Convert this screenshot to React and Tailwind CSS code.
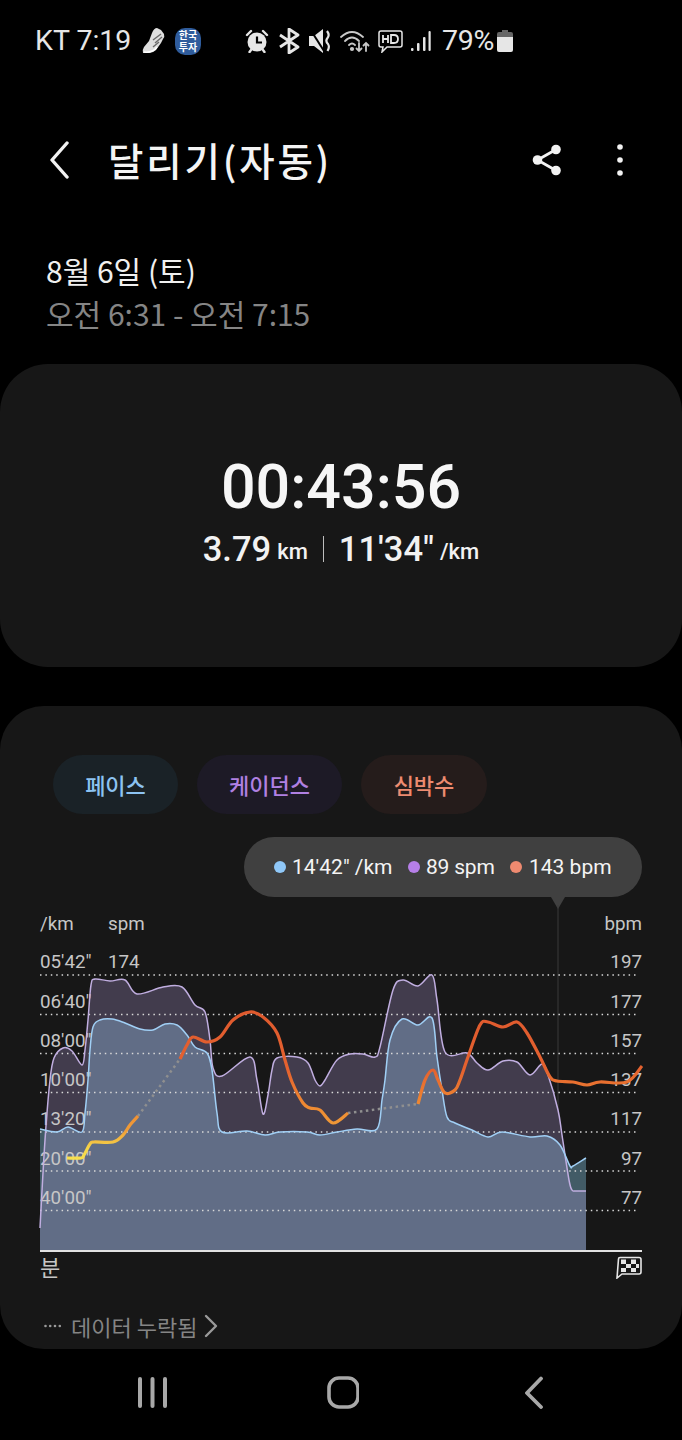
import React from "react";

const SANS = "font-['Roboto','Noto_Sans_CJK_KR',sans-serif]";

function smooth(pts) {
  let d = `M${pts[0][0]} ${pts[0][1]}`;
  for (let i = 0; i < pts.length - 1; i++) {
    const p0 = pts[i - 1] || pts[i];
    const p1 = pts[i];
    const p2 = pts[i + 1];
    const p3 = pts[i + 2] || p2;
    const c1x = p1[0] + (p2[0] - p0[0]) / 6;
    const c1y = p1[1] + (p2[1] - p0[1]) / 6;
    const c2x = p2[0] - (p3[0] - p1[0]) / 6;
    const c2y = p2[1] - (p3[1] - p1[1]) / 6;
    d += ` C${c1x.toFixed(1)} ${c1y.toFixed(1)} ${c2x.toFixed(1)} ${c2y.toFixed(1)} ${p2[0]} ${p2[1]}`;
  }
  return d;
}

const purple = [[40,1228],[45,1140],[50,1080],[54,1058],[63,1048],[72,1051],[82,1065],[85,1050],[88,1020],[91,985],[95,979],[110,981],[125,980],[137,994],[163,987],[182,987],[195,1005],[205,1012],[210,1040],[213,1068],[222,1076],[250,1057],[257,1080],[263,1114],[268,1095],[272,1070],[277,1058],[297,1057],[308,1063],[315,1080],[320,1086],[325,1080],[337,1060],[350,1054],[363,1054],[375,1057],[380,1047],[393,990],[403,980],[418,986],[432,975],[437,1000],[445,1052],[467,1053],[477,1063],[488,1070],[503,1061],[517,1062],[530,1075],[542,1064],[548,1075],[558,1110],[562,1135],[569,1180],[572,1190],[575,1191],[586,1191]];
const blue = [[40,1129],[57,1132],[68,1127],[82,1132],[85,1113],[88,1080],[90,1050],[93,1027],[100,1020],[112,1019],[125,1023],[140,1029],[153,1030],[165,1024],[177,1025],[187,1035],[195,1047],[207,1053],[212,1070],[217,1113],[222,1132],[247,1131],[265,1135],[280,1132],[307,1132],[320,1135],[337,1132],[357,1129],[377,1129],[382,1100],[385,1080],[390,1040],[402,1019],[418,1025],[432,1018],[437,1057],[442,1090],[447,1117],[455,1123],[472,1130],[488,1137],[502,1132],[530,1137],[547,1136],[560,1145],[570,1166],[573,1166],[586,1158]];
const hr1 = [[67,1158],[81,1158],[84,1155],[90,1144],[94,1142],[113,1142],[123,1135],[130,1125],[138,1116]];
const hr2 = [[180,1059],[187,1045],[193,1037],[207,1042],[220,1037],[233,1020],[250,1012],[263,1017],[277,1033],[285,1060],[292,1082],[303,1103],[310,1108],[320,1110],[333,1123],[348,1113]];
const hr3 = [[418,1104],[425,1080],[433,1070],[438,1080],[445,1093],[455,1090],[460,1080],[468,1057],[480,1025],[488,1022],[503,1027],[517,1022],[527,1033],[540,1057],[550,1077],[557,1081],[573,1082],[587,1085],[600,1082],[627,1082],[642,1066]];
const gridYs = [975, 1014.5, 1053.5, 1092.5, 1132, 1171, 1210.5];

function Chip({ cls, children }) {
  return <div className={`h-[59px] rounded-full flex items-center justify-center text-[22px] font-medium ${cls}`}>{children}</div>;
}

function Dot({ cls }) {
  return <span className={`w-[12px] h-[12px] rounded-full shrink-0 ${cls}`} />;
}

function StatusIcons() {
  return (
    <div className="flex items-center text-[#e6e6e6] text-[28.500px] leading-none">
      <span className="w-[106px] shrink-0">KT 7:19</span>
      <svg width="24" height="28" viewBox="0 0 24 28" fill="none">
        <path d="M2 26 Q1 23 3 20 L8 14 L11 6 Q13 1 16 1 L20 3 L23 7 Q24 10 22 12 L20 16 L15 23 Q12 26 8 26Z" fill="#dedede" />
        <path d="M12 13 L20 7 M14 16 L21 10 M12 20 L18 15" stroke="#6a6a6a" strokeWidth="1.400" />
        <path d="M3 25 Q12 26 16 20" stroke="#ffffff" strokeWidth="1.500" />
      </svg>
      <span className="ml-[10px] w-[26px] h-[27px] shrink-0 rounded-[10px] bg-[#2f5c9c] text-white text-[10px] leading-[12px] font-bold flex items-center justify-center text-center font-['Noto_Sans_CJK_KR',sans-serif]">한국<br />투자</span>
      <svg width="24" height="24" viewBox="0 0 24 24" className="ml-[44px] shrink-0" fill="none"><circle cx="12" cy="13" r="9.500" fill="#e6e6e6"/><path d="M12 7.500 V13.500 H17" stroke="#000" strokeWidth="2.200"/><path d="M2 6 L6 2 M22 6 L18 2 M6 21 L4.500 23 M18 21 L19.500 23" stroke="#e6e6e6" strokeWidth="2.400" strokeLinecap="round"/></svg>
      <svg width="22" height="26" viewBox="0 0 22 26" className="ml-[9px] shrink-0" fill="none" stroke="#e6e6e6" strokeWidth="2.800" strokeLinejoin="round"><path d="M2 7 L20 19 L11 25 V1 L20 7 L2 19"/></svg>
      <svg width="22" height="24" viewBox="0 0 22 24" className="ml-[9px] shrink-0" fill="none"><path d="M0 7 H5 L14 0 V24 L5 17 H0Z" fill="#e6e6e6"/><path d="M1 0 L15 22" stroke="#000" strokeWidth="2"/><path d="M18 2 Q21 6 18.500 9 Q16 12 19 15 Q21 18 18.500 22" stroke="#e6e6e6" strokeWidth="2.200"/></svg>
      <svg width="30" height="24" viewBox="0 0 30 24" className="ml-[9px] shrink-0" fill="none" stroke="#c8c8c8" strokeWidth="1.800" strokeLinecap="round"><path d="M1 8 Q12 -2 23 8"/><path d="M5 12 Q12 5 19 12"/><path d="M9 16 Q12 13 15 16"/><circle cx="12" cy="20" r="1.200" fill="#e6e6e6"/><path d="M19 14 V22 M16.500 19.500 L19 22 L21.500 19.500"/><path d="M26 22 V14 M23.500 16.500 L26 14 L28.500 16.500"/></svg>
      <svg width="25" height="24" viewBox="0 0 25 24" className="ml-[8px] shrink-0" fill="none" stroke="#e6e6e6" strokeWidth="1.500"><path d="M3 2 H22 Q24 2 24 4 V16 Q24 18 22 18 H9 L4 23 L5 18 H3 Q1 18 1 16 V4 Q1 2 3 2Z"/><path d="M5 6 V14 M5 10 H10 M10 6 V14" strokeWidth="1.800"/><path d="M13 6 H16 Q20 6 20 10 Q20 14 16 14 H13Z" strokeWidth="1.800"/></svg>
      <svg width="21" height="22" viewBox="0 0 21 22" className="ml-[7px] shrink-0" fill="#e6e6e6"><rect x="1" y="18" width="2.500" height="3" rx="1"/><rect x="7" y="13" width="2.500" height="8" rx="1"/><rect x="13" y="7" width="2.500" height="14" rx="1"/><rect x="18.500" y="1" width="2.200" height="20" rx="1"/></svg>
      <span className="ml-[11px] w-[54px] shrink-0 tracking-[-0.300px]">79%</span>
      <svg width="16" height="24" viewBox="0 0 16 24" className="ml-[1px] shrink-0"><path d="M5 1 H11 V3 H14 Q16 3 16 5 V8 H0 V5 Q0 3 2 3 H5Z" fill="#666"/><path d="M0 8 H16 V21 Q16 23 14 23 H2 Q0 23 0 21Z" fill="#e6e6e6"/></svg>
    </div>
  );
}

export default function App() {
  return (
    <div className={`w-[682px] h-[1440px] bg-black text-white overflow-hidden flex flex-col ${SANS}`}>
      <div className="h-[82px] pl-[35px] flex items-center shrink-0"><StatusIcons /></div>

      <div className="h-[156px] flex items-center pl-[49px] pr-[59px] shrink-0">
        <svg width="20" height="38" viewBox="0 0 20 38" fill="none" stroke="#f2f2f2" strokeWidth="3.400" strokeLinecap="round" strokeLinejoin="round"><path d="M18 2 L3 19 L18 36" /></svg>
        <div className="ml-[39px] -mt-[2px] text-[38.500px] tracking-[2.800px] leading-none font-medium text-[#f4f4f4] font-['Noto_Sans_CJK_KR',sans-serif]">달리기(자동)</div>
        <div className="ml-auto flex items-center gap-[55px]">
          <svg width="30" height="32" viewBox="0 0 30 32" fill="#f2f2f2"><circle cx="24" cy="5.500" r="4.800"/><circle cx="5.500" cy="16" r="4.800"/><circle cx="24" cy="26.500" r="4.800"/><path d="M24 5.500 L5.500 16 L24 26.500" fill="none" stroke="#f2f2f2" strokeWidth="2.800"/></svg>
          <svg width="6" height="32" viewBox="0 0 6 32" fill="#f2f2f2"><circle cx="3" cy="3" r="2.800"/><circle cx="3" cy="16" r="2.800"/><circle cx="3" cy="29" r="2.800"/></svg>
        </div>
      </div>

      <div className="pl-[46px] h-[126px] pt-[11px] shrink-0 font-['Noto_Sans_CJK_KR',sans-serif] text-[30px] leading-[43px]">
        <div className="text-[#f0f0f0]">8월 6일 (토)</div>
        <div className="text-[#858585]">오전 6:31 - 오전 7:15</div>
      </div>

      <div className="h-[303px] shrink-0 rounded-[48px] bg-[#171717] flex flex-col items-center pt-[88px]">
        <div className="text-[61px] leading-[70px] font-medium text-[#f6f6f6]">00:43:56</div>
        <div className="mt-[11px] flex items-center h-[32px] text-[#f2f2f2] font-medium">
          <span className="text-[34.500px] leading-none">3.79</span>
          <span className="text-[22px] leading-none ml-[6px] mt-[6px]">km</span>
          <span className="w-px h-[26px] bg-[#bdbdbd] ml-[15px] mr-[15px]" />
          <span className="text-[34.500px] leading-none">11'34"</span>
          <span className="text-[22px] leading-none ml-[6px] mt-[6px]">/km</span>
        </div>
      </div>

      <div className="mt-[39px] h-[643px] shrink-0 rounded-[44px] bg-[#171717] flex flex-col">
        <div className="mt-[49px] pl-[53px] flex gap-[19px] font-['Noto_Sans_CJK_KR',sans-serif]">
          <Chip cls="w-[125px] bg-[#1a2227] text-[#8cc3f2]">페이스</Chip>
          <Chip cls="w-[145px] bg-[#1d1a26] text-[#b080e2]">케이던스</Chip>
          <Chip cls="w-[126px] bg-[#251c1b] text-[#ed8b70]">심박수</Chip>
        </div>

        <div className="mt-[23px] ml-[244px] w-[398px] h-[60px] rounded-full bg-[#404040] flex items-center pl-[30px] text-[21px] leading-none text-[#f4f4f4]">
          <Dot cls="bg-[#90c8f8]" />
          <span className="ml-[6px] w-[116px]">14'42" /km</span>
          <Dot cls="bg-[#b67fe8]" />
          <span className="ml-[6px] w-[84px] tracking-[-0.200px]">89 spm</span>
          <Dot cls="bg-[#ee8a70]" />
          <span className="ml-[7px]">143 bpm</span>
        </div>

        <div className="relative h-[355px] text-[18.800px] leading-none text-[#c6c6c6]">
          <svg className="absolute inset-0" width="682" height="355" viewBox="0 897 682 355" fill="none">
            <path d="M551 897 H565 L558 909Z" fill="#404040" />
            <path d="M558 905 V1110" stroke="#3a3a3a" strokeWidth="1" />
            <path d={`${smooth(blue)} L586 1250 L40 1250Z`} fill="#8fd6f5" fillOpacity="0.36" />
            <path d={`${smooth(purple)} L586 1250 L40 1250Z`} fill="#b39ddb" fillOpacity="0.28" />
            {gridYs.map((y) => (
              <path key={y} d={`M40 ${y} H639`} stroke="#d8d8d8" strokeWidth="1.500" strokeDasharray="1.500 3.900" />
            ))}
          </svg>

          <div className="absolute left-[40px] top-[8px] flex flex-col">
            {["/km", "05'42\"", "06'40\"", "08'00\"", "10'00\"", "13'20\"", "20'00\"", "40'00\""].map((t, i) => (
              <div key={t} className={`flex items-center ${i === 0 ? "h-[38px]" : "h-[39.300px]"}`}>{t}</div>
            ))}
          </div>
          <div className="absolute left-[108px] top-[8px] flex flex-col">
            <div className="h-[38px] flex items-center">spm</div>
            <div className="h-[39.300px] flex items-center">174</div>
          </div>
          <div className="absolute right-[40px] top-[8px] flex flex-col items-end">
            {["bpm", "197", "177", "157", "137", "117", "97", "77"].map((t, i) => (
              <div key={t} className={`flex items-center ${i === 0 ? "h-[38px]" : "h-[39.300px]"}`}>{t}</div>
            ))}
          </div>

          <svg className="absolute inset-0" width="682" height="355" viewBox="0 897 682 355" fill="none">
            <defs>
              <linearGradient id="hr" gradientUnits="userSpaceOnUse" x1="0" y1="1010" x2="0" y2="1160">
                <stop offset="0" stopColor="#df5a2e" />
                <stop offset="0.4" stopColor="#e5622f" />
                <stop offset="0.62" stopColor="#ee8731" />
                <stop offset="0.8" stopColor="#ef9c38" />
                <stop offset="0.92" stopColor="#f6d548" />
                <stop offset="1" stopColor="#f6e04e" />
              </linearGradient>
            </defs>
            <path d={smooth(purple)} stroke="#c0aee0" strokeWidth="1.500" />
            <path d={smooth(blue)} stroke="#a0cff5" strokeWidth="1.500" />
            <path d="M138 1116 L180 1059 M348 1113 L418 1104" stroke="#8f8f8f" strokeWidth="2.500" strokeDasharray="2.500 3.500" />
            <path d={smooth(hr1)} stroke="url(#hr)" strokeWidth="3.200" />
            <path d={smooth(hr2)} stroke="url(#hr)" strokeWidth="3.200" />
            <path d={smooth(hr3)} stroke="url(#hr)" strokeWidth="3.200" />
            <path d="M40 1251 H642" stroke="#e2e2e2" strokeWidth="2" />
          </svg>
        </div>

        <div className="h-[30px] px-[40px] flex items-center justify-between font-['Noto_Sans_CJK_KR',sans-serif] text-[22px] leading-none text-[#c6c6c6]">
          <span className="-mt-[2px]">분</span>
          <svg width="26" height="23" viewBox="0 0 26 23" fill="none"><path d="M4 1.500 H23 Q25 1.500 25 3.500 V16 Q25 18 23 18 H6 L1 22 L2.500 3 Q2.500 1.500 4 1.500Z" fill="#171717" stroke="#e6e6e6" strokeWidth="1.600"/><path d="M5 3.500 H10 V8 H5Z M15 3.500 H20 V8 H15Z M10 8 H15 V12 H10Z M20 8 H23 V12 H20Z M5 12 H10 V16 H5Z M15 12 H20 V16 H15Z" fill="#e6e6e6"/></svg>
        </div>

        <div className="mt-[29px] pl-[44px] h-[30px] flex items-center font-['Noto_Sans_CJK_KR',sans-serif] text-[22px] leading-none text-[#858585]">
          <svg width="18" height="4" viewBox="0 0 18 4" fill="#9a9a9a"><circle cx="1.500" cy="2" r="1.300"/><circle cx="6.200" cy="2" r="1.300"/><circle cx="11" cy="2" r="1.300"/><circle cx="15.800" cy="2" r="1.300"/></svg>
          <span className="ml-[9px]">데이터 누락됨</span>
          <svg width="14" height="24" viewBox="0 0 14 24" className="ml-[7px]" fill="none" stroke="#9a9a9a" strokeWidth="2.400" strokeLinecap="round" strokeLinejoin="round"><path d="M2 2 L12 12 L2 22" /></svg>
        </div>
      </div>

      <div className="pl-[136px] pt-[27px] flex items-start gap-[159px]">
        <svg width="32" height="32" viewBox="0 0 32 32" fill="#a8a8a8"><rect x="2" y="1" width="4" height="31" rx="2"/><rect x="14.500" y="1" width="4" height="31" rx="2"/><rect x="27" y="1" width="4" height="31" rx="2"/></svg>
        <svg width="32" height="33" viewBox="0 0 32 33" fill="none" stroke="#a8a8a8" strokeWidth="3.600"><rect x="2" y="2" width="29" height="29" rx="10"/></svg>
        <svg width="32" height="33" viewBox="0 0 32 33" className="ml-[7px]" fill="none" stroke="#a8a8a8" strokeWidth="3.800" strokeLinecap="round" strokeLinejoin="round"><path d="M16 2.500 L2 17 L16 31" /></svg>
      </div>
    </div>
  );
}
